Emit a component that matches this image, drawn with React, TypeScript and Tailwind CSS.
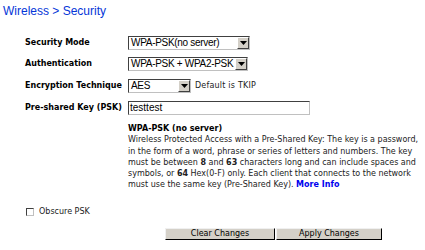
import React from "react";

function Arrow() {
  return (
    <div className="w-[12px] h-[12px] bg-[#d4d0c8] border-t border-l border-t-white border-l-white border-r border-b border-r-[#404040] border-b-[#404040] flex items-center justify-center shrink-0">
      <svg width="7" height="4" viewBox="0 0 7 4">
        <path d="M0 0 H7 L3.5 4 Z" fill="#000" />
      </svg>
    </div>
  );
}

const arial = { fontFamily: '"Liberation Sans", Arial, sans-serif' };
const verd = { fontFamily: '"DejaVu Sans", Verdana, sans-serif' };

function Select({ value, width }: { value: string; width: string }) {
  return (
    <div
      className={`${width} h-[14px] bg-white border border-t-[#404040] border-l-[#404040] border-r-[#c0c0c0] border-b-[#c0c0c0] flex items-center overflow-hidden`}
    >
      <div className="flex-1 min-w-0 pl-[2px] text-[10px] tracking-[-0.3px] leading-[12px] whitespace-nowrap overflow-hidden text-black" style={arial}>
        {value}
      </div>
      <Arrow />
    </div>
  );
}

export default function App() {
  return (
    <div className="w-[425px] h-[250px] bg-white overflow-hidden relative">
      <div className="pl-[3px] pt-[4px] text-[12px] leading-[14px] text-[#0536d8]" style={arial}>
        Wireless &gt; Security
      </div>

      <div className="mt-[18px] flex flex-col gap-[7px]" style={verd}>
        <div className="flex items-center h-[14px]">
          <div className="w-[128px] pl-[25px] text-[8px] font-bold text-black">Security Mode</div>
          <Select value="WPA-PSK(no server)" width="w-[122px]" />
        </div>
        <div className="flex items-center h-[14px]">
          <div className="w-[128px] pl-[25px] text-[8px] font-bold text-black">Authentication</div>
          <Select value="WPA-PSK + WPA2-PSK" width="w-[120px]" />
        </div>
        <div className="flex items-center h-[14px] mt-[1px]">
          <div className="w-[128px] pl-[25px] text-[8px] font-bold text-black">Encryption Technique</div>
          <Select value="AES" width="w-[63px]" />
          <div className="ml-[4px] text-[8px] tracking-[0.2px] text-[#222]">Default is TKIP</div>
        </div>
        <div className="flex items-center h-[14px] mt-[1px]">
          <div className="w-[128px] pl-[25px] text-[8px] font-bold text-black">Pre-shared Key (PSK)</div>
          <div className="w-[182px] h-[14px] bg-white border border-t-[#404040] border-l-[#404040] border-r-[#c0c0c0] border-b-[#c0c0c0] flex items-center">
            <span className="pl-[1px] text-[10px] leading-[12px] text-black" style={arial}>testtest</span>
          </div>
        </div>
      </div>

      <div className="ml-[128px] mt-[8px] text-[8px] leading-[11.3px] text-[#222] whitespace-nowrap" style={verd}>
        <div className="font-bold text-black">WPA-PSK (no server)</div>
        <div>
          Wireless Protected Access with a Pre-Shared Key: The key is a password,
          <br />
          in the form of a word, phrase or series of letters and numbers. The key
          <br />
          must be between <b>8</b> and <b>63</b> characters long and can include spaces and
          <br />
          symbols, or <b>64</b> Hex(0-F) only. Each client that connects to the network
          <br />
          must use the same key (Pre-Shared Key). <b className="text-[#0000ee]">More Info</b>
        </div>
      </div>

      <div className="ml-[26px] mt-[17px] flex items-center h-[9px]" style={verd}>
        <div className="w-[8px] h-[8px] border border-t-[#404040] border-l-[#404040] border-r-[#c0c0c0] border-b-[#c0c0c0] bg-white" />
        <div className="ml-[5px] text-[8px] text-[#222]">Obscure PSK</div>
      </div>

      <div className="ml-[165px] mt-[11px] flex gap-[1px]" style={verd}>
        <div className="w-[110px] h-[12px] bg-[#d4d0c8] border-t border-l border-t-[#f0f0f0] border-l-[#f0f0f0] border-r border-b border-r-black border-b-black flex items-center justify-center text-[8px] text-black">
          Clear Changes
        </div>
        <div className="w-[106px] h-[12px] bg-[#d4d0c8] border-t border-l border-t-[#f0f0f0] border-l-[#f0f0f0] border-r border-b border-r-black border-b-black flex items-center justify-center text-[8px] text-black">
          Apply Changes
        </div>
      </div>
    </div>
  );
}
